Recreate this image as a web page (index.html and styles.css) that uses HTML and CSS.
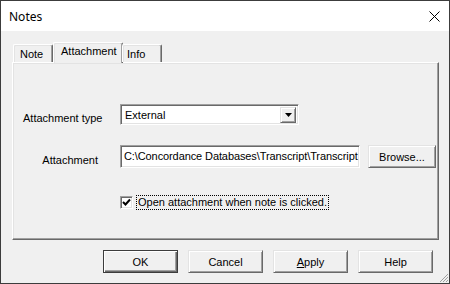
FILE: index.html
```html
<!DOCTYPE html>
<html lang="en">
<head>
  <meta charset="UTF-8">
  <title>Notes</title>
  <link rel="stylesheet" href="styles.css">
</head>
<body>

  <div class="window">
    <!-- title bar -->
    <div class="titlebar">
      <span class="title">Notes</span>
      <svg class="close" width="11" height="11" viewBox="0 0 11 11">
        <path d="M0.5 0.5 L10.5 10.5 M10.5 0.5 L0.5 10.5" stroke="#000" stroke-width="1" fill="none"/>
      </svg>
    </div>

    <div class="dialog">
      <!-- tabs -->
      <div class="tabs">
        <div class="tab tab-note">Note</div>
        <div class="tab tab-attach active">Attachment</div>
        <div class="tab tab-info">Info</div>
      </div>

      <div class="panel">
        <div class="row row-type">
          <label class="lbl lbl-type">Attachment type</label>
          <div class="select">
            <span class="select-value">External</span>
            <span class="drop">
              <svg width="7" height="4" viewBox="0 0 7 4"><path d="M0 0 H7 L3.5 4 Z" fill="#000"/></svg>
            </span>
          </div>
        </div>

        <div class="row row-file">
          <label class="lbl lbl-file">Attachment</label>
          <div class="field"><span class="field-text">C:\Concordance Databases\Transcript\Transcript</span></div>
          <button class="btn btn-browse">Browse...</button>
        </div>

        <div class="row row-check">
          <span class="checkbox">
            <svg width="9" height="9" viewBox="0 0 9 9"><path d="M1 4 L3.5 6.5 L8 1.5" stroke="#000" stroke-width="2" fill="none"/></svg>
          </span>
          <span class="check-label">Open attachment when note is clicked.</span>
        </div>
      </div>

      <!-- dialog buttons -->
      <div class="footer">
        <button class="btn default">OK</button>
        <button class="btn">Cancel</button>
        <button class="btn"><u>A</u>pply</button>
        <button class="btn">Help</button>
      </div>
    </div>

    <svg class="grip" width="11" height="11" viewBox="0 0 11 11">
      <path d="M10 2 L2 10 M10 5 L5 10 M10 8 L8 10" stroke="#a0a0a0" stroke-width="1" fill="none"/>
    </svg>
  </div>

</body>
</html>
```
FILE: styles.css
```css
body {
  margin: 0;
  background: #f0f0f0;
  font-family: 'Liberation Sans', Arial, sans-serif;
  font-size: 11px;
  color: #000;
}
.window {
  position: relative;
  width: 450px;
  height: 284px;
  box-sizing: border-box;
  border: 1px solid #3c3c3c;
  background: #f0f0f0;
}
.titlebar {
  height: 30px;
  background: #fff;
  display: flex;
  align-items: center;
  justify-content: space-between;
  padding: 0 9px 0 8px;
}
.title {
  font-family: 'Noto Sans', sans-serif;
  font-size: 12px;
}
.close {
  display: block;
}

.dialog {
  padding: 11px 10px 0 11px;
}

/* tabs */
.tabs {
  display: flex;
  align-items: flex-end;
  height: 20px;
  padding-left: 1px;
  position: relative;
  z-index: 1;
}
.tab {
  height: 18px;
  box-sizing: border-box;
  border-top: 1px solid #fff;
  border-left: 1px solid #fff;
  border-right: 1px solid #696969;
  box-shadow: inset -1px 0 #a0a0a0, inset 1px 1px #e3e3e3;
  border-radius: 2px 2px 0 0;
  padding: 3px 0 0 6px;
  line-height: 13px;
}
.tab-note {
  width: 40px;
}
.tab-attach {
  width: 70px;
  padding-left: 7px;
}
.tab-info {
  width: 40px;
  padding-left: 4px;
  margin-left: -1px;
}
.tab.active {
  height: 21px;
  margin-bottom: -1px;
  background: #f0f0f0;
  padding-top: 2px;
}

.panel {
  height: 178px;
  box-sizing: border-box;
  border-top: 1px solid #fff;
  border-left: 1px solid #fff;
  border-right: 1px solid #696969;
  border-bottom: 1px solid #696969;
  box-shadow: inset -1px -1px #a0a0a0, inset 1px 1px #e3e3e3;
  padding: 41px 0 0 10px;
}
.row {
  display: flex;
  align-items: center;
}
.lbl {
  width: 97px;
  padding-top: 6px;
}
.lbl-file {
  text-align: right;
  padding-right: 22px;
  width: 75px;
}
.row-file {
  margin-top: 20px;
}
.row-check {
  margin-top: 27px;
  padding-left: 97px;
}

/* sunken controls */
.select, .field {
  box-sizing: border-box;
  background: #fff;
  border-top: 1px solid #a0a0a0;
  border-left: 1px solid #a0a0a0;
  border-right: 1px solid #fff;
  border-bottom: 1px solid #fff;
  box-shadow: inset 1px 1px #696969, inset -1px -1px #e3e3e3;
}
.select {
  width: 179px;
  height: 21px;
  display: flex;
  align-items: center;
  justify-content: space-between;
  padding: 0 2px 0 4px;
}
.drop {
  width: 16px;
  height: 16px;
  box-sizing: border-box;
  background: #f0f0f0;
  border-top: 1px solid #e3e3e3;
  border-left: 1px solid #e3e3e3;
  border-right: 1px solid #696969;
  border-bottom: 1px solid #696969;
  box-shadow: inset 1px 1px #fff, inset -1px -1px #a0a0a0;
  display: flex;
  align-items: center;
  justify-content: center;
}
.drop svg {
  display: block;
}
.field {
  width: 240px;
  height: 23px;
  line-height: 21px;
  padding-left: 3px;
  white-space: nowrap;
  overflow: hidden;
}
.field-text {
  letter-spacing: -0.1px;
}

/* raised buttons */
.btn {
  font-family: 'Liberation Sans', Arial, sans-serif;
  font-size: 11px;
  color: #000;
  box-sizing: border-box;
  width: 75px;
  height: 23px;
  padding: 0;
  background: #f0f0f0;
  border-top: 1px solid #e3e3e3;
  border-left: 1px solid #e3e3e3;
  border-right: 1px solid #696969;
  border-bottom: 1px solid #696969;
  box-shadow: inset 1px 1px #fff, inset -1px -1px #a0a0a0;
}
.btn u {
  text-decoration: underline;
}
.btn.default {
  border: 1px solid #3c3c3c;
  box-shadow: inset 1px 1px #fff, inset -1px -1px #696969, inset -2px -2px #a0a0a0;
}
.btn-browse {
  width: 68px;
  margin-left: 8px;
}

.checkbox {
  width: 13px;
  height: 13px;
  box-sizing: border-box;
  background: #fff;
  border-top: 1px solid #a0a0a0;
  border-left: 1px solid #a0a0a0;
  border-right: 1px solid #fff;
  border-bottom: 1px solid #fff;
  box-shadow: inset 1px 1px #696969, inset -1px -1px #e3e3e3;
  display: flex;
  align-items: center;
  justify-content: center;
}
.checkbox svg {
  display: block;
}
.check-label {
  margin-left: 3px;
  border: 1px dotted #000;
  padding: 0 1px;
  line-height: 13px;
}

.footer {
  display: flex;
  justify-content: flex-end;
  gap: 10px;
  margin-top: 10px;
  padding-right: 6px;
}

.grip {
  position: absolute;
  right: 0;
  bottom: 0;
}
```
